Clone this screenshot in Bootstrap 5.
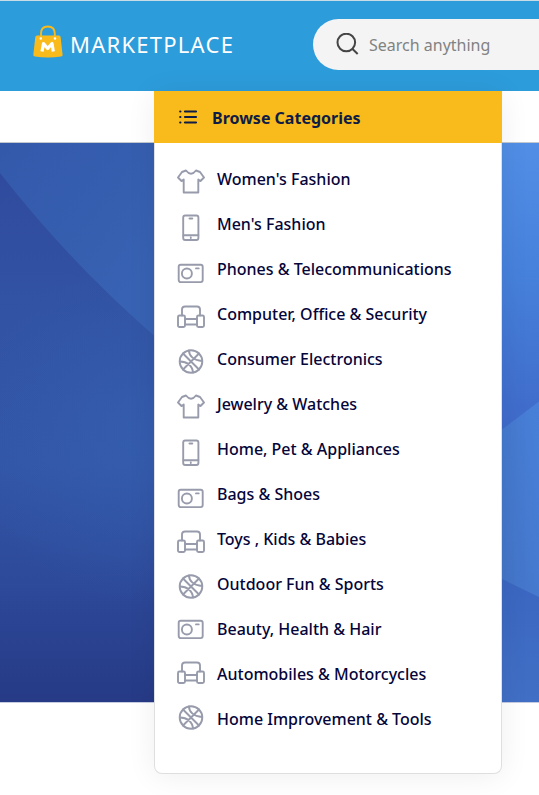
<!DOCTYPE html>
<html lang="en">
<head>
<meta charset="utf-8">
<meta name="viewport" content="width=device-width, initial-scale=1">
<title>Marketplace</title>
<link href="https://cdn.jsdelivr.net/npm/bootstrap@5.3.0/dist/css/bootstrap.min.css" rel="stylesheet">
<style>
body{font-family:"Noto Sans",sans-serif;background:#fff;overflow:hidden;height:795px;position:relative}
.topbar{height:91px;background:#2d9cdb;border-top:1px solid #c9dce5;padding-left:33px;flex-wrap:nowrap}
.brand-name{font-size:22px;line-height:30px;letter-spacing:1.25px;color:#fff;margin:-4px 0 0 7px;width:243px;white-space:nowrap}
.search-pill{min-width:0;height:51px;background:#f4f4f4;border-radius:26px 0 0 26px;padding-left:23px;margin-top:-3px}
.search-pill input{font-size:16px;color:#555;margin-left:9px;width:160px;padding:0}
.search-pill input::placeholder{color:#828282;opacity:1}
.subbar{height:51px}
.hero{height:561px;border-top:1px solid #c3c8cf;border-bottom:1px solid #c5cbe0}
.category-menu{left:154px;top:91px;width:348px;height:683px;border:1px solid #dedfe1;border-top:0;border-radius:0 0 8px 8px;box-shadow:0 2px 30px rgba(0,0,0,.07)}
.menu-title{height:52px;margin:0 -1px;background:#f9bb1c;color:#0f1c45;font-size:16px;font-weight:700;padding-left:24px}
.menu-title span{margin-left:13px;padding-top:2px}
.menu-list{padding:13px 0 0 22px}
.menu-list a{height:45px;color:#05053a;font-size:16px;font-weight:500;white-space:nowrap;text-decoration:none}
.menu-list svg{fill:none;stroke:#989bab;stroke-width:1.9;stroke-linejoin:round;stroke-linecap:round;margin:6px 12px 0 0}
.menu-list a.raised svg{margin-top:-2px}
</style>
<script src="https://cdn.jsdelivr.net/npm/bootstrap@5.3.0/dist/js/bootstrap.bundle.min.js"></script>
</head>
<body>
<svg class="d-none">
<symbol id="shirt" viewBox="0 0 28 28"><path d="M9 2.500Q14 9 19 2.500L23 4L27 9.500L23.500 13L21.300 11.500V24.500H6.700V11.500L4.500 13L1 9.500L5 4Z"/></symbol>
<symbol id="phone" viewBox="0 0 28 28"><rect x="6.200" y="2.500" width="15.200" height="24.500" rx="2"/><path d="M6.500 22.300H21.300M12.500 5.500H15.300M13.800 24.500V25"/></symbol>
<symbol id="camera" viewBox="0 0 28 28"><rect x="1.700" y="6.800" width="24" height="17.300" rx="2"/><circle cx="9.900" cy="15.500" r="5"/><path d="M19 10.400H21.700"/></symbol>
<symbol id="sofa" viewBox="0 0 28 28"><path d="M5 12.500V6.500Q5 3.500 8 3.500H20Q23 3.500 23 6.500V12.500M8 16H20M8 21.500H20"/><rect x="1" y="12.500" width="7" height="11.500" rx="1.500"/><rect x="20" y="12.500" width="7" height="11.500" rx="1.500"/></symbol>
<symbol id="ball" viewBox="0 0 28 28"><circle cx="14" cy="13.500" r="11.300"/><path d="M6 5.500L22 21.500M22 5.500L6 21.500M12 2.500C12 8 17 12.500 25 13M3 13.500C10 13.500 15.500 18 16 24.500"/></symbol>
</svg>
<header class="topbar d-flex align-items-center">
<svg width="30" height="34" viewBox="0 0 30 34" class="flex-shrink-0 mb-2"><path d="M8 13V8.500Q8 1.500 14.800 1.500T21.800 8.500V13" fill="none" stroke="#f9bb1c" stroke-width="1.900"/><path d="M4 10.500H26Q27.300 10.500 27.600 12L29.600 30Q29.600 31.200 28 31.500Q15 33.500 2 31.500Q.3 31.200.3 30L2.300 12Q2.600 10.500 4 10.500Z" fill="#f9bb1c"/><path d="M9 26.500L10.500 18.500L14.700 23.500L19 18.500L20.300 26.500" fill="none" stroke="#fff" stroke-width="3.200" stroke-linejoin="round"/><circle cx="7.800" cy="13.500" r="1.200" fill="#fff"/><circle cx="22" cy="13.500" r="1.200" fill="#fff"/></svg>
<div class="brand-name flex-shrink-0">MARKETPLACE</div>
<div class="search-pill d-flex align-items-center flex-grow-1">
<svg class="flex-shrink-0" width="24" height="24" viewBox="0 0 24 24" fill="none" stroke="#454545" stroke-width="2"><circle cx="10.300" cy="9.500" r="8.800"/><path d="M16.500 16L21.700 21"/></svg>
<input class="form-control-plaintext border-0" type="text" placeholder="Search anything" aria-label="Search anything">
</div>
</header>
<div class="subbar"></div>
<section class="hero">
<svg class="d-block" width="539" height="559" viewBox="0 0 539 559">
<defs>
<linearGradient id="facet" gradientUnits="userSpaceOnUse" x1="0" y1="0" x2="155" y2="120"><stop offset="0" stop-color="#3359ab"/><stop offset="1" stop-color="#3862b3"/></linearGradient>
<linearGradient id="deep" x1="0" y1="0" x2="0" y2="1"><stop offset="0" stop-color="#304b9d"/><stop offset=".28" stop-color="#3253a4"/><stop offset=".55" stop-color="#3356a7"/><stop offset=".78" stop-color="#2d4999"/><stop offset="1" stop-color="#263a86"/></linearGradient>
<radialGradient id="glow" gradientUnits="userSpaceOnUse" cx="140" cy="290" r="170"><stop offset="0" stop-color="#355fb0" stop-opacity=".7"/><stop offset="1" stop-color="#355fb0" stop-opacity="0"/></radialGradient>
<linearGradient id="sky" gradientUnits="userSpaceOnUse" x1="530" y1="0" x2="505" y2="290"><stop offset="0" stop-color="#528ee6"/><stop offset=".45" stop-color="#4681db"/><stop offset="1" stop-color="#3f69c9"/></linearGradient>
<linearGradient id="mid" x1="1" y1="0" x2="0" y2="1"><stop offset="0" stop-color="#4880d9"/><stop offset="1" stop-color="#4373c5"/></linearGradient>
<linearGradient id="low" x1="0" y1="0" x2="0" y2="1"><stop offset="0" stop-color="#3b66c1"/><stop offset="1" stop-color="#416fc5"/></linearGradient>
</defs>
<path d="M0 0H300V559H0Z" fill="url(#facet)"/>
<path d="M0 30Q70 120 160 198V559H0Z" fill="url(#deep)"/>
<path d="M0 30Q70 120 160 198V559H0Z" fill="url(#glow)"/>
<path d="M500 0H539V290H500Z" fill="url(#sky)"/>
<path d="M500 288L539 258.500V460H500Z" fill="url(#mid)"/>
<path d="M500 435L539 454V559H500Z" fill="url(#low)"/>
</svg>
</section>
<nav class="category-menu position-absolute bg-white" aria-label="Categories">
<div class="menu-title d-flex align-items-center">
<svg width="21" height="16" viewBox="0 0 21 16" stroke="#0f1c45" stroke-width="2.200" stroke-linecap="round"><path d="M7 2.500H18M7 8H18M7 13.500H18M2.200 2.500H2.400M2.200 8H2.400M2.200 13.500H2.400"/></svg>
<span>Browse Categories</span>
</div>
<div class="menu-list d-flex flex-column">
<a class="d-flex align-items-center" href="#"><svg width="28" height="28"><use href="#shirt"/></svg>Women's Fashion</a>
<a class="d-flex align-items-center" href="#"><svg width="28" height="28"><use href="#phone"/></svg>Men's Fashion</a>
<a class="d-flex align-items-center" href="#"><svg width="28" height="28"><use href="#camera"/></svg>Phones &amp; Telecommunications</a>
<a class="d-flex align-items-center" href="#"><svg width="28" height="28"><use href="#sofa"/></svg>Computer, Office &amp; Security</a>
<a class="d-flex align-items-center" href="#"><svg width="28" height="28"><use href="#ball"/></svg>Consumer Electronics</a>
<a class="d-flex align-items-center" href="#"><svg width="28" height="28"><use href="#shirt"/></svg>Jewelry &amp; Watches</a>
<a class="d-flex align-items-center" href="#"><svg width="28" height="28"><use href="#phone"/></svg>Home, Pet &amp; Appliances</a>
<a class="d-flex align-items-center" href="#"><svg width="28" height="28"><use href="#camera"/></svg>Bags &amp; Shoes</a>
<a class="d-flex align-items-center" href="#"><svg width="28" height="28"><use href="#sofa"/></svg>Toys , Kids &amp; Babies</a>
<a class="d-flex align-items-center" href="#"><svg width="28" height="28"><use href="#ball"/></svg>Outdoor Fun &amp; Sports</a>
<a class="d-flex align-items-center raised" href="#"><svg width="28" height="28"><use href="#camera"/></svg>Beauty, Health &amp; Hair</a>
<a class="d-flex align-items-center raised" href="#"><svg width="28" height="28"><use href="#sofa"/></svg>Automobiles &amp; Motorcycles</a>
<a class="d-flex align-items-center raised" href="#"><svg width="28" height="28"><use href="#ball"/></svg>Home Improvement &amp; Tools</a>
</div>
</nav>
</body>
</html>
